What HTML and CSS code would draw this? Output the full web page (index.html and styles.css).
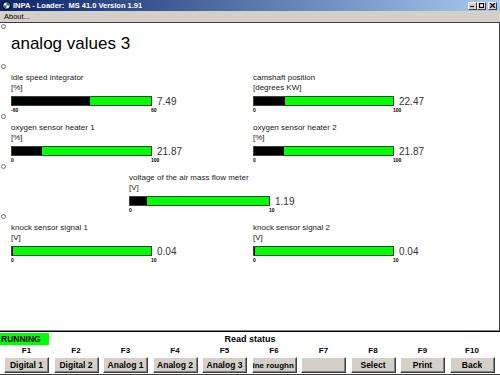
FILE: index.html
```html
<!DOCTYPE html>
<html>
<head>
  <title>INPA - Loader: MS 41.0 Version 1.91</title>
  <link rel="stylesheet" href="styles.css">
</head>
<body>
  <div class="window">
    <div class="titlebar">
      <svg class="logo" width="9" height="9" viewBox="0 0 18 18">
        <circle cx="9" cy="9" r="9" fill="#111"/>
        <circle cx="9" cy="9" r="6" fill="#fff"/>
        <path d="M9 9 V3 A6 6 0 0 1 15 9 Z" fill="#1c69d4"/>
        <path d="M9 9 V15 A6 6 0 0 1 3 9 Z" fill="#1c69d4"/>
      </svg>
      <span class="caption">INPA - Loader:  MS 41.0 Version 1.91</span>
      <div class="controls">
        <div class="ctrl">
          <svg width="7" height="5" viewBox="0 0 7 5"><rect x="1" y="3" width="4" height="1" fill="#000"/></svg>
        </div>
        <div class="ctrl">
          <svg width="7" height="5" viewBox="0 0 7 5"><rect x="1.5" y="0.5" width="4" height="4" fill="none" stroke="#000"/><rect x="1" y="0" width="5" height="1" fill="#000"/></svg>
        </div>
        <div class="ctrl close">
          <svg width="7" height="5" viewBox="0 0 7 5"><path d="M1 0 L6 5 M6 0 L1 5" stroke="#000" stroke-width="1.2"/></svg>
        </div>
      </div>
    </div>

    <div class="menubar"><span>About...</span></div>

    <main class="content">
      <div class="mark"></div>
      <h1 class="title">analog values 3</h1>

      <div class="mark"></div>
      <div class="row">
        <div class="gauge">
          <div class="label">idle speed integrator</div>
          <div class="unit">[%]</div>
          <div class="meter">
            <div class="bar"><div class="fill" style="width: 56%"></div></div>
            <span class="value">7.49</span>
          </div>
          <div class="scale"><span class="min">-60</span><span>60</span></div>
        </div>
        <div class="gauge">
          <div class="label">camshaft position</div>
          <div class="unit">[degrees KW]</div>
          <div class="meter">
            <div class="bar"><div class="fill" style="width: 22.5%"></div></div>
            <span class="value">22.47</span>
          </div>
          <div class="scale"><span class="min">0</span><span>100</span></div>
        </div>
      </div>

      <div class="mark"></div>
      <div class="row">
        <div class="gauge">
          <div class="label">oxygen sensor heater 1</div>
          <div class="unit">[%]</div>
          <div class="meter">
            <div class="bar"><div class="fill" style="width: 21.9%"></div></div>
            <span class="value">21.87</span>
          </div>
          <div class="scale"><span class="min">0</span><span>100</span></div>
        </div>
        <div class="gauge">
          <div class="label">oxygen sensor heater 2</div>
          <div class="unit">[%]</div>
          <div class="meter">
            <div class="bar"><div class="fill" style="width: 21.9%"></div></div>
            <span class="value">21.87</span>
          </div>
          <div class="scale"><span class="min">0</span><span>100</span></div>
        </div>
      </div>

      <div class="mark"></div>
      <div class="row single">
        <div class="gauge">
          <div class="label">voltage of the air mass flow meter</div>
          <div class="unit">[V]</div>
          <div class="meter">
            <div class="bar"><div class="fill" style="width: 11.9%"></div></div>
            <span class="value">1.19</span>
          </div>
          <div class="scale"><span class="min">0</span><span>10</span></div>
        </div>
      </div>

      <div class="mark"></div>
      <div class="row">
        <div class="gauge">
          <div class="label">knock sensor signal 1</div>
          <div class="unit">[V]</div>
          <div class="meter">
            <div class="bar"><div class="fill" style="width: 0.4%"></div></div>
            <span class="value">0.04</span>
          </div>
          <div class="scale"><span class="min">0</span><span>10</span></div>
        </div>
        <div class="gauge">
          <div class="label">knock sensor signal 2</div>
          <div class="unit">[V]</div>
          <div class="meter">
            <div class="bar"><div class="fill" style="width: 0.4%"></div></div>
            <span class="value">0.04</span>
          </div>
          <div class="scale"><span class="min">0</span><span>10</span></div>
        </div>
      </div>
    </main>

    <footer class="status">
      <div class="state">
        <span class="running">RUNNING</span>
        <span class="msg">Read status</span>
        <span></span>
      </div>
      <div class="keys">
        <div class="key"><span class="fkey">F1</span><div class="btn"><span>Digital 1</span></div></div>
        <div class="key"><span class="fkey">F2</span><div class="btn"><span>Digital 2</span></div></div>
        <div class="key"><span class="fkey">F3</span><div class="btn"><span>Analog 1</span></div></div>
        <div class="key"><span class="fkey">F4</span><div class="btn"><span>Analog 2</span></div></div>
        <div class="key"><span class="fkey">F5</span><div class="btn"><span>Analog 3</span></div></div>
        <div class="key"><span class="fkey">F6</span><div class="btn tight"><span>ine roughn</span></div></div>
        <div class="key"><span class="fkey">F7</span><div class="btn"><span></span></div></div>
        <div class="key"><span class="fkey">F8</span><div class="btn"><span>Select</span></div></div>
        <div class="key"><span class="fkey">F9</span><div class="btn"><span>Print</span></div></div>
        <div class="key"><span class="fkey">F10</span><div class="btn"><span>Back</span></div></div>
      </div>
    </footer>
  </div>
</body>
</html>
```

FILE: styles.css
```css
body {
  margin: 0;
  font-family: "Liberation Sans", Arial, sans-serif;
  background: #fff;
  color: #000;
}

.window {
  display: flex;
  flex-direction: column;
  width: 500px;
  height: 375px;
  overflow: hidden;
}

/* title bar */
.titlebar {
  display: flex;
  align-items: center;
  height: 11px;
  padding: 0 3px 0 2px;
  background: linear-gradient(to right, #0a246a, #a6caf0);
}

.logo {
  flex: none;
  margin-right: 2px;
}

.caption {
  color: #fff;
  font-size: 7.5px;
  font-weight: bold;
  white-space: pre;
}

.controls {
  display: flex;
  margin-left: auto;
}

.ctrl {
  display: flex;
  align-items: center;
  justify-content: center;
  width: 9px;
  height: 8px;
  box-sizing: border-box;
  background: #d4d0c8;
  border: 1px solid;
  border-color: #fff #404040 #404040 #fff;
}

.ctrl.close {
  margin-left: 2px;
}

.menubar {
  height: 11px;
  padding-left: 4px;
  background: #d4d0c8;
  border-bottom: 1px solid #404040;
  font-size: 7.5px;
  line-height: 11px;
}

/* analog values */
.content {
  flex: 1;
  padding-top: 1px;
  border-right: 1px solid #404040;
  border-bottom: 1px solid #808080;
}

.mark {
  width: 5px;
  height: 5px;
  box-sizing: border-box;
  margin-left: 1px;
  border: 1px solid #777;
  border-radius: 50%;
}

.title {
  margin: 5px 0 10px 11px;
  font-size: 17px;
  font-weight: normal;
  line-height: 20px;
}

.row {
  display: grid;
  grid-template-columns: 242px 1fr;
  height: 41px;
  margin-top: 4px;
  padding-left: 11px;
}

.row.single {
  padding-left: 129px;
}

.label,
.unit {
  font-size: 8px;
  line-height: 10px;
  color: #222;
  white-space: nowrap;
}

.meter {
  display: flex;
  align-items: flex-end;
  height: 10px;
  margin-top: 3px;
}

.bar {
  flex: none;
  width: 141px;
  height: 10px;
  box-sizing: border-box;
  border: 1px solid #2f4a2f;
  background: #00ff00;
}

.fill {
  height: 100%;
  background: #000;
}

.value {
  margin: 0 0 -1px 5px;
  font-size: 10px;
  line-height: 10px;
  color: #333;
}

.scale {
  display: flex;
  padding-top: 1px;
  font-size: 5px;
  font-weight: bold;
  line-height: 7px;
}

.scale .min {
  width: 140px;
}

/* status and function keys */
.status {
  padding: 1px 0;
  border-top: 1px solid #000;
  border-bottom: 1px solid #404040;
  font-weight: bold;
}

.state {
  display: grid;
  grid-template-columns: 1fr auto 1fr;
  align-items: center;
  height: 12px;
  font-size: 9px;
}

.running {
  justify-self: start;
  width: 49px;
  height: 12px;
  box-sizing: border-box;
  padding-left: 1px;
  background: #00ff00;
  font-size: 8.5px;
  line-height: 12px;
}

.keys {
  display: grid;
  grid-template-columns: repeat(10, 45px);
  column-gap: 4.5px;
  margin-top: 1px;
  padding-left: 4px;
}

.key {
  display: flex;
  flex-direction: column;
  align-items: center;
  gap: 1px;
}

.fkey {
  font-size: 8px;
  line-height: 10px;
}

.btn {
  display: flex;
  align-items: center;
  justify-content: center;
  width: 45px;
  height: 16px;
  box-sizing: border-box;
  overflow: hidden;
  background: #d4d0c8;
  border: 1px solid;
  border-color: #fff #404040 #404040 #fff;
  box-shadow: inset -1px -1px #808080;
  font-size: 8.5px;
  white-space: nowrap;
}

.btn.tight {
  justify-content: flex-start;
  font-size: 8px;
}
```
